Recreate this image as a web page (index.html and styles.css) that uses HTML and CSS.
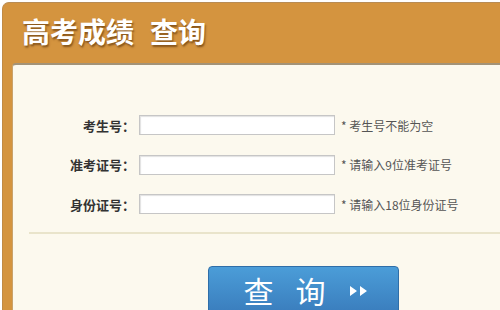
FILE: index.html
```html
<!DOCTYPE html>
<html lang="zh-CN">
<head>
  <meta charset="UTF-8">
  <title>高考成绩查询</title>
  <link rel="stylesheet" href="styles.css">
</head>
<body>
  <div class="panel">
    <div class="panel-head">
      <h1>高考成绩<span class="sub">查询</span></h1>
    </div>
    <div class="panel-body">
      <form class="query-form">
        <div class="row">
          <label for="ksh">考生号：</label>
          <input type="text" id="ksh">
          <span class="hint">* 考生号不能为空</span>
        </div>
        <div class="row">
          <label for="zkzh">准考证号：</label>
          <input type="text" id="zkzh">
          <span class="hint">* 请输入9位准考证号</span>
        </div>
        <div class="row">
          <label for="sfzh">身份证号：</label>
          <input type="text" id="sfzh">
          <span class="hint">* 请输入18位身份证号</span>
        </div>
        <div class="divider"></div>
        <div class="actions">
          <button type="button" class="btn-query">
            <span>查</span><span>询</span>
            <svg width="22" height="12" viewBox="0 0 22 12"><path d="M2 1 L9 6 L2 11 Z M12 1 L19 6 L12 11 Z" fill="#fff"/></svg>
          </button>
        </div>
      </form>
    </div>
  </div>
</body>
</html>
```

FILE: styles.css
```css
* { margin: 0; padding: 0; box-sizing: border-box; }
body { font-family: "Noto Sans CJK SC", "Liberation Sans", sans-serif; background: #fff; color: #333; height: 310px; overflow: hidden; }
.panel { margin: 2px 0 0 2px; background: #d4943f; border-top: 1px solid #b88c55; border-left: 1px solid #c08a45; border-radius: 7px 0 0 0; padding-left: 9px; height: 320px; }
.panel-head { height: 60px; display: flex; align-items: center; padding-left: 10px; padding-bottom: 5px; }
.panel-head h1 { font-size: 28px; font-weight: bold; color: #fff; letter-spacing: 0; text-shadow: 1px 2px 2px rgba(80,40,0,0.6); }
.panel-head .sub { margin-left: 16px; }
.panel-body { background: #fcf9ee; border-top: 2px solid #a39377; border-left: 1px solid #c9a26a; border-radius: 4px 0 0 0; height: 260px; padding-top: 50px; }
.row { display: flex; align-items: center; height: 20px; margin-bottom: 19.5px; }
.row label { width: 122px; text-align: right; font-size: 13px; font-weight: bold; color: #333; }
.row input { width: 196px; height: 20px; margin-left: 4px; border: 1px solid #c6c6c6; box-shadow: inset 1px 1px 1px #e2e2e2; background: #fff; }
.hint { margin-left: 6px; font-size: 12px; color: #555; }
.divider { height: 2px; background: #e9e4cb; margin: -2px 0 0 16px; }
.actions { padding: 32px 0 0 195px; }
.btn-query { width: 191px; height: 48px; border: 1px solid #2f6ea8; border-radius: 4px; background: linear-gradient(#4b9dd8, #3a7dbd); color: #fff; font-family: "Noto Sans CJK SC", sans-serif; font-size: 30px; display: flex; align-items: center; justify-content: center; gap: 22px; padding-left: 6px; padding-bottom: 0; }
.btn-query svg { margin-top: 2px; }
```
